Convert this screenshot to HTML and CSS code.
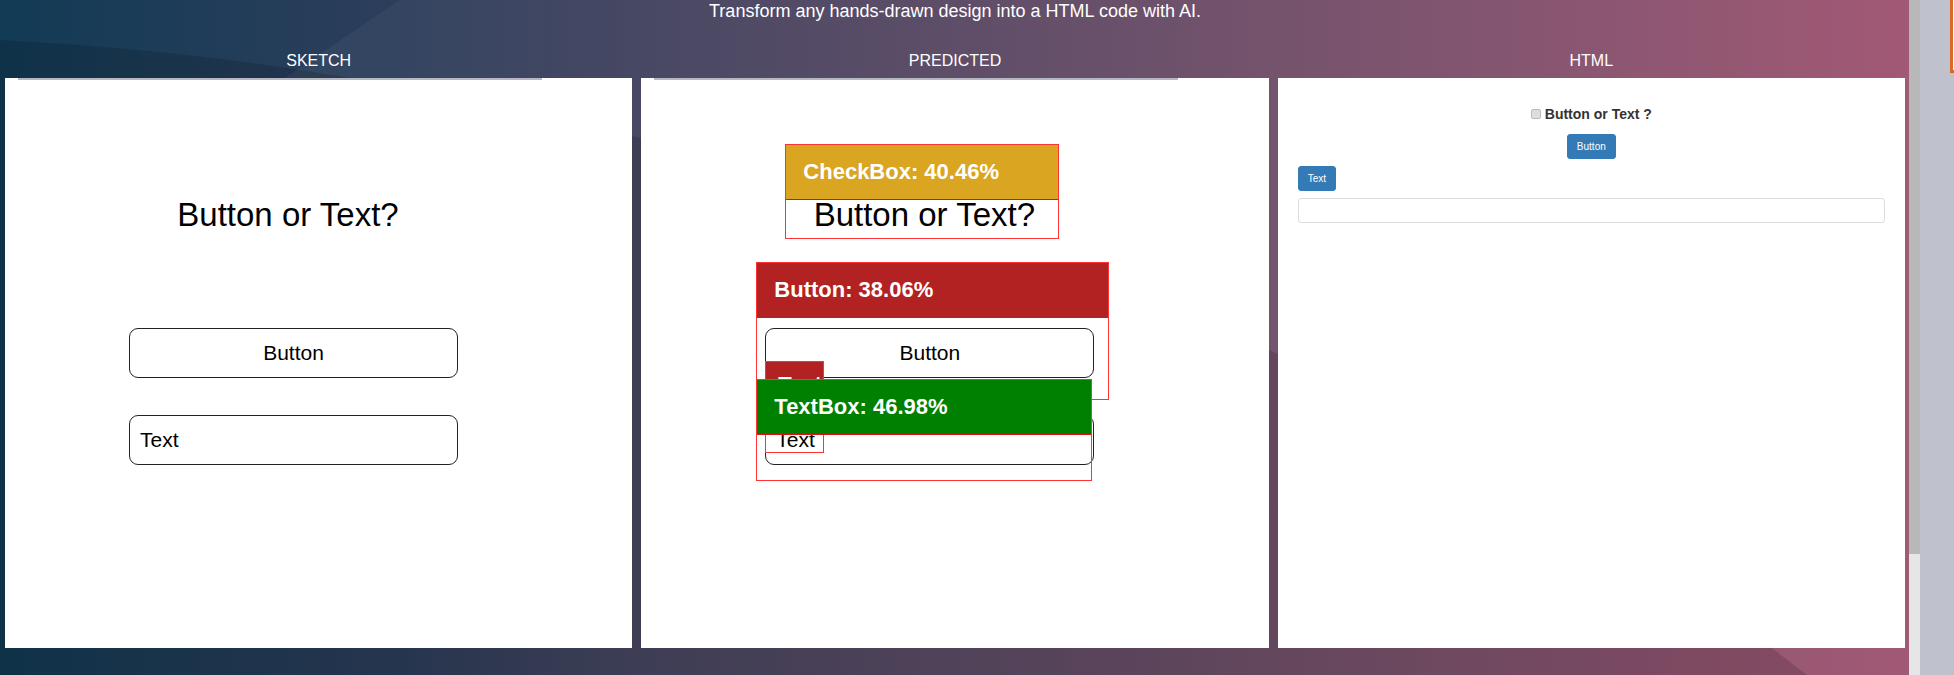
FILE: index.html
```html
<!DOCTYPE html>
<html lang="en">
<head>
<meta charset="utf-8">
<title>Sketch to HTML</title>
<link rel="stylesheet" href="styles.css">
</head>
<body>
<div class="page">
  <main class="stage">
    <svg class="backdrop" viewBox="0 0 1909 675" preserveAspectRatio="none" aria-hidden="true">
      <defs>
        <linearGradient id="glow" gradientUnits="userSpaceOnUse" x1="285" y1="0" x2="620" y2="0">
          <stop offset="0" stop-color="#fff" stop-opacity=".05"/>
          <stop offset=".5" stop-color="#fff" stop-opacity=".03"/>
          <stop offset="1" stop-color="#fff" stop-opacity="0"/>
        </linearGradient>
      </defs>
      <path d="M400 0H620V140L285 78Z" fill="url(#glow)"/>
      <path d="M0 40Q190 50 350 78Q500 106 632 136Q960 215 1285 357Q1610 480 1772 648L1807 675H0Z" fill="#000" fill-opacity=".14"/>
    </svg>
    <p class="tagline">Transform any hands-drawn design into a HTML code with AI.</p>
    <div class="columns">
      <section class="column">
        <h2 class="column-title">SKETCH</h2>
        <div class="panel">
          <div class="strip"></div>
          <div class="sketch">
            <p class="sketch-title">Button or Text?</p>
            <button class="sketch-control" type="button">Button</button>
            <input class="sketch-control sketch-input" type="text" value="Text" aria-label="Sketched text box">
          </div>
        </div>
      </section>
      <section class="column">
        <h2 class="column-title">PREDICTED</h2>
        <div class="panel">
          <div class="strip"></div>
          <div class="sketch">
            <p class="sketch-title">Button or Text?</p>
            <button class="sketch-control" type="button">Button</button>
            <input class="sketch-control sketch-input" type="text" value="Text" aria-label="Detected text box">
          </div>
          <div class="detection detection-checkbox"><span class="tag tag-gold">CheckBox: 40.46%</span></div>
          <div class="detection detection-button"><span class="tag tag-red">Button: 38.06%</span></div>
          <div class="detection detection-text"><span class="tag tag-red tag-short">Text</span></div>
          <div class="detection detection-textbox"><span class="tag tag-green">TextBox: 46.98%</span></div>
        </div>
      </section>
      <section class="column">
        <h2 class="column-title">HTML</h2>
        <div class="panel result">
          <label class="check"><input class="check-box" type="checkbox">Button or Text ?</label>
          <button class="action action-center" type="button">Button</button>
          <button class="action" type="button">Text</button>
          <input class="field" type="text" aria-label="Text box">
        </div>
      </section>
    </div>
  </main>
  <div class="scrollbar"><div class="thumb"></div></div>
  <aside class="margin"><div class="frame"></div></aside>
</div>
</body>
</html>
```
FILE: styles.css
```css
* {
  box-sizing: border-box;
}

body {
  margin: 0;
  font-family: "Liberation Sans", Arial, sans-serif;
}

h2,
p {
  margin: 0;
  font-weight: 400;
}

button,
input {
  font-family: inherit;
  margin: 0;
}

.page {
  display: flex;
  min-height: 100vh;
}

.stage {
  position: relative;
  z-index: 0;
  flex: 1;
  display: flex;
  flex-direction: column;
  padding: 0 4px 27px 5px;
  color: #fff;
  background: linear-gradient(90deg, #123b55 0%, #2d3e5b 21%, #474863 33%, #75536d 67%, #a15975 100%);
}

.backdrop {
  position: absolute;
  inset: 0;
  z-index: -1;
  width: 100%;
  height: 100%;
}

.tagline {
  font-size: 18px;
  line-height: 22px;
  text-align: center;
}

.columns {
  flex: 1;
  display: grid;
  grid-template-columns: repeat(3, 1fr);
  gap: 9px;
  padding-top: 29px;
}

.column {
  display: flex;
  flex-direction: column;
  gap: 7px;
}

.column-title {
  font-size: 16px;
  line-height: 20px;
  text-align: center;
}

.panel {
  position: relative;
  flex: 1;
  background: #fff;
  color: #000;
}

.strip {
  height: 2px;
  width: 524px;
  margin-left: 13px;
  background: #b5b8c2;
}

.sketch {
  display: flex;
  flex-direction: column;
  width: 329px;
  margin-left: 124px;
  padding-top: 116px;
}

.sketch-title {
  padding-right: 11px;
  margin-bottom: 94px;
  font-size: 33px;
  line-height: 38px;
  text-align: center;
  white-space: nowrap;
}

.sketch-control {
  height: 50px;
  margin-bottom: 37px;
  padding: 0 10px;
  border: 1px solid #222;
  border-radius: 9px;
  background: #fff;
  color: #000;
  font-size: 21px;
}

.sketch-input {
  width: 100%;
}

.detection {
  position: absolute;
  border: 1px solid #f33;
}

.detection-checkbox {
  left: 144px;
  top: 66px;
  width: 274px;
  height: 95px;
}

.detection-button {
  left: 115px;
  top: 184px;
  width: 353px;
  height: 138px;
}

.detection-text {
  left: 124px;
  top: 283px;
  width: 59px;
  height: 92px;
}

.detection-textbox {
  left: 115px;
  top: 301px;
  width: 336px;
  height: 102px;
}

.tag {
  display: block;
  padding-left: 17px;
  border-bottom: 1px solid #d11;
  color: #fff;
  font-size: 22px;
  font-weight: 700;
  line-height: 54px;
  white-space: nowrap;
}

.tag-short {
  padding-left: 12px;
  line-height: 46px;
}

.tag-gold {
  background: #daa520;
}

.tag-red {
  background: #b22222;
}

.tag-green {
  background: #008000;
}

.result {
  display: flex;
  flex-direction: column;
  align-items: flex-start;
  gap: 7px;
  padding: 26px 20px 0;
}

.check {
  display: flex;
  align-items: center;
  align-self: center;
  gap: 4px;
  margin-bottom: 3px;
  color: #333;
  font-size: 14px;
  font-weight: 700;
  line-height: 20px;
}

.check-box {
  appearance: none;
  width: 10px;
  height: 10px;
  border: 1px solid #bbb;
  border-radius: 2px;
  background: #ddd;
}

.action {
  height: 25px;
  padding: 0 9px;
  border: 1px solid #337ab7;
  border-radius: 3px;
  background: #337ab7;
  color: #fff;
  font-size: 10px;
}

.action-center {
  align-self: center;
}

.field {
  width: 100%;
  height: 25px;
  padding: 0 8px;
  border: 1px solid #ddd;
  border-radius: 3px;
  background: #fff;
}

.scrollbar {
  width: 11px;
  background: #e6e6e6;
}

.thumb {
  height: 554px;
  background: #b8b8b8;
}

.margin {
  display: flex;
  justify-content: flex-end;
  align-items: flex-start;
  width: 34px;
  background: #bfc2cc;
}

.frame {
  width: 4px;
  height: 73px;
  border-left: 3px solid #d96b28;
  border-bottom: 3px solid #d96b28;
  background: #fff;
}
```
